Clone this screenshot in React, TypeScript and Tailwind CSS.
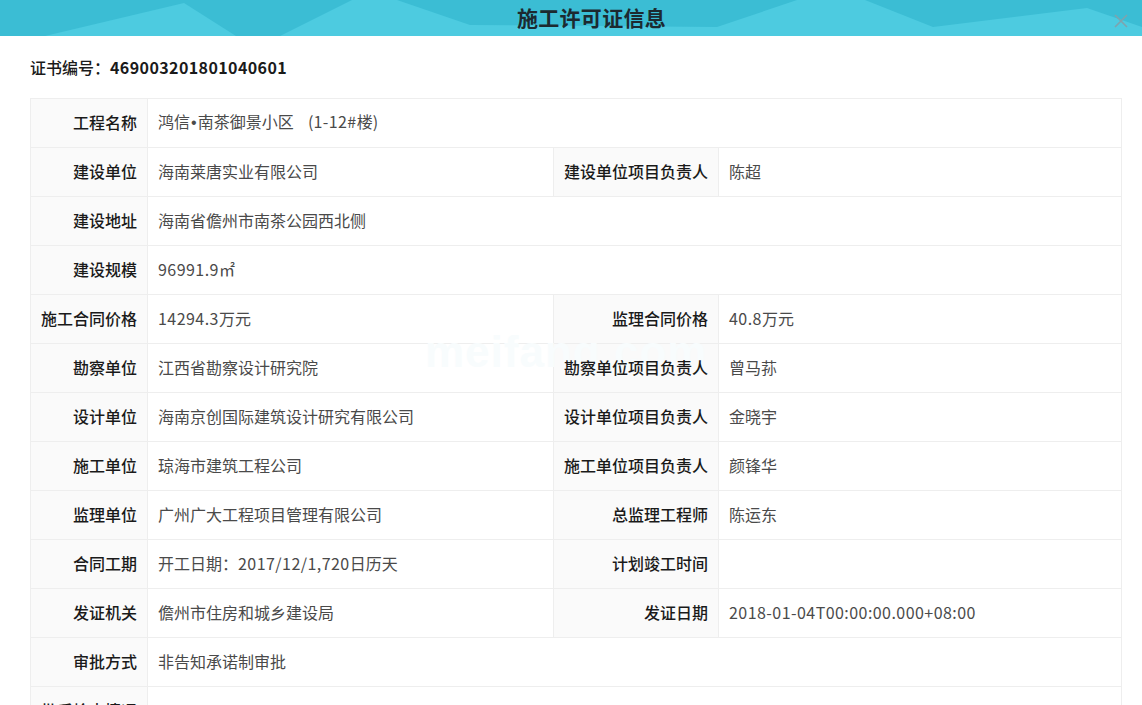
const font = { fontFamily: '"Noto Sans CJK SC", "Noto Sans", sans-serif' };

type Cell = { l: string; v: string };
const rows: Cell[][] = [
  [{ l: "工程名称", v: "鸿信•南茶御景小区\u00a0\u00a0\u00a0\u00a0(1-12#楼)" }],
  [{ l: "建设单位", v: "海南莱唐实业有限公司" }, { l: "建设单位项目负责人", v: "陈超" }],
  [{ l: "建设地址", v: "海南省儋州市南茶公园西北侧" }],
  [{ l: "建设规模", v: "96991.9㎡" }],
  [{ l: "施工合同价格", v: "14294.3万元" }, { l: "监理合同价格", v: "40.8万元" }],
  [{ l: "勘察单位", v: "江西省勘察设计研究院" }, { l: "勘察单位项目负责人", v: "曾马荪" }],
  [{ l: "设计单位", v: "海南京创国际建筑设计研究有限公司" }, { l: "设计单位项目负责人", v: "金晓宇" }],
  [{ l: "施工单位", v: "琼海市建筑工程公司" }, { l: "施工单位项目负责人", v: "颜锋华" }],
  [{ l: "监理单位", v: "广州广大工程项目管理有限公司" }, { l: "总监理工程师", v: "陈运东" }],
  [{ l: "合同工期", v: "开工日期：2017/12/1,720日历天" }, { l: "计划竣工时间", v: "" }],
  [{ l: "发证机关", v: "儋州市住房和城乡建设局" }, { l: "发证日期", v: "2018-01-04T00:00:00.000+08:00" }],
  [{ l: "审批方式", v: "非告知承诺制审批" }],
  [{ l: "批后检查情况", v: "" }],
];

const th = "h-[49px] border border-[#eeeeee] bg-[#fafafa] px-[10px] pb-[2px] text-right align-middle text-[16px] font-medium whitespace-nowrap text-[#1a1a1a]";
const td = "h-[49px] border border-[#eeeeee] px-[10px] pb-[2px] text-left align-middle text-[16px] font-normal whitespace-nowrap text-[#4a4a4a]";

function Value({ text }: { text: string }) {
  const parts = text.split(/([0-9A-Za-z.:+\-\/,#•]+)/);
  return (
    <span className="relative z-10">
      {parts.map((p, i) =>
        i % 2 === 1 ? (
          p === "•" ? (
            <span key={i} className="mx-px" style={{ fontFamily: '"Liberation Sans", sans-serif' }}>{p}</span>
          ) : (
            <span key={i} className="tracking-[0.45px]">{p}</span>
          )
        ) : (
          <span key={i}>{p}</span>
        ),
      )}
    </span>
  );
}

export default function App() {
  return (
    <div className="relative h-[705px] w-[1142px] overflow-hidden bg-white" style={font}>
      <header className="relative flex h-9 items-center justify-center bg-[#4dcbe0]">
        <svg className="absolute inset-0" width="1142" height="36" viewBox="0 0 1142 36">
          <rect width="1142" height="36" fill="#3bbdd4" />
          <path d="M45 36L184 3L236 36Z" fill="#4dcbe0" />
          <path d="M280 36L352 0H397L470 25L717 27L797 0H865L933 27L1087 8L1142 27V36Z" fill="#4dcbe0" />
        </svg>
        <h1 className="relative ml-[41px] text-[21px] font-bold tracking-[0.3px] text-[#1c2a30]">施工许可证信息</h1>
        <svg className="absolute top-[14px] left-[1114px]" width="14" height="14" viewBox="0 0 14 14">
          <path d="M1 1L13 13M13 1L1 13" stroke="#7fa3ad" strokeWidth="1.6" fill="none" />
        </svg>
      </header>
      <main className="px-[30px]">
        <p className="flex h-[62px] items-center text-[16px] font-medium text-[#1a1a1a]">
          证书编号：<span className="font-bold tracking-[0.4px]">469003201801040601</span>
        </p>
        <table className="w-[1092px] table-fixed border-collapse">
          <colgroup>
            <col className="w-[117px]" />
            <col className="w-[406px]" />
            <col className="w-[165px]" />
            <col />
          </colgroup>
          <tbody>
            {rows.map((row) => (
              <tr key={row[0].l}>
                <th className={th}><span className="relative z-10">{row[0].l}</span></th>
                {row.length === 1 ? (
                  <td className={td} colSpan={3}><Value text={row[0].v} /></td>
                ) : (
                  <>
                    <td className={td}><Value text={row[0].v} /></td>
                    <th className={th}><span className="relative z-10">{row[1].l}</span></th>
                    <td className={td}><Value text={row[1].v} /></td>
                  </>
                )}
              </tr>
            ))}
          </tbody>
        </table>
      </main>
      <div
        className="pointer-events-none absolute top-[330px] left-[425px] text-[44px] leading-none font-bold tracking-[1px] text-[#f8fcfd]"
        style={{ fontFamily: '"Liberation Sans", sans-serif' }}
      >
        meifang.com
      </div>
    </div>
  );
}
